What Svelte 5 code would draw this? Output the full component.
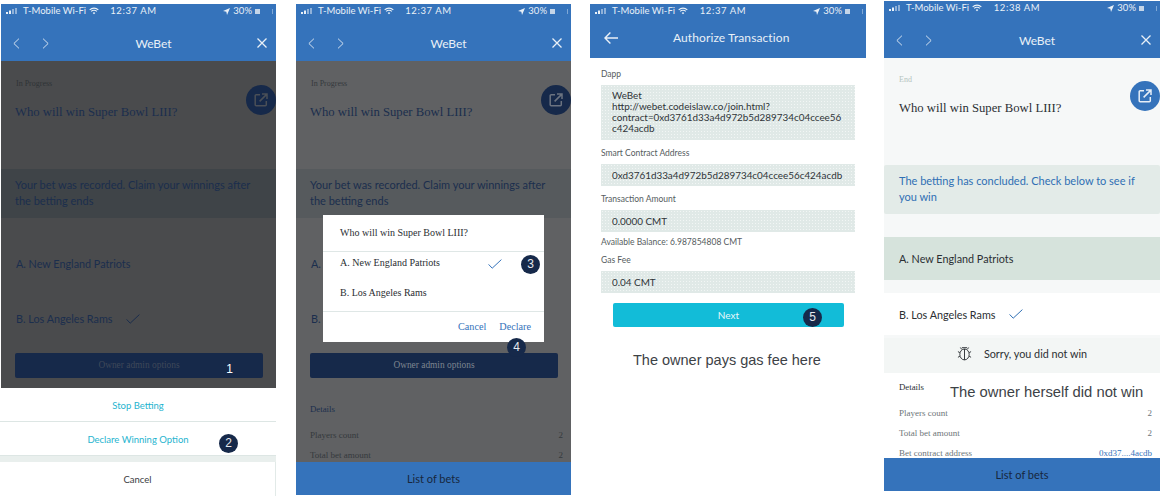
<script>
	const options = ['A. New England Patriots', 'B. Los Angeles Rams'];
	const contract = '0xd3761d33a4d972b5d289734c04ccee56c424acdb';
</script>

{#snippet status(time)}
	<div class="status">
		<span class="carrier">
			<svg class="signal" viewBox="0 0 14 6" width="14" height="6">
				<rect x="0" y="4" width="2" height="2" />
				<rect x="3" y="2.5" width="2" height="3.5" />
				<rect x="6" y="1" width="2" height="5" opacity=".5" />
				<rect x="9" y="0" width="2" height="6" opacity=".5" />
			</svg>
			T-Mobile Wi-Fi
			<svg viewBox="0 0 12 9" width="10" height="8" fill="none" stroke="currentColor" stroke-width="1.3">
				<path d="M.8 3.2a7.4 7.4 0 0 1 10.4 0M2.6 5a4.8 4.8 0 0 1 6.8 0" />
				<path d="M4.4 6.8a2.2 2.2 0 0 1 3.2 0L6 8.4z" fill="currentColor" stroke="none" />
			</svg>
		</span>
		<span class="time">{time}</span>
		<span class="battery">
			<svg viewBox="0 0 8 8" width="7" height="7" fill="currentColor"><path d="M8 0 4.6 8 3.8 4.2 0 3.4z" /></svg>
			30%
			<i class="cell"></i>
			<i class="bolt"></i>
		</span>
	</div>
{/snippet}

{#snippet webetNav()}
	<div class="nav">
		<div class="nav-left">
			<svg viewBox="0 0 8 12" width="7" height="11" fill="none" stroke="currentColor"><path d="M6.8.5 1 6l5.8 5.5" /></svg>
			<svg viewBox="0 0 8 12" width="7" height="11" fill="none" stroke="currentColor"><path d="M1.2.5 7 6l-5.8 5.5" /></svg>
		</div>
		<div class="nav-title">WeBet</div>
		<div class="nav-right">
			<svg viewBox="0 0 10 10" width="10" height="10" fill="none" stroke="currentColor" stroke-width="1.3"><path d="m.5.5 9 9M9.5.5l-9 9" /></svg>
		</div>
	</div>
{/snippet}

{#snippet check()}
	<svg class="check" viewBox="0 0 14 10" width="14" height="10" fill="none" stroke="currentColor"><path d="m.6 5.4 3.6 3.8L13.4.6" /></svg>
{/snippet}

{#snippet fab()}
	<div class="fab">
		<svg viewBox="0 0 14 14" width="14" height="14" fill="none" stroke="currentColor" stroke-width="1.5">
			<path d="M6 1.7H2.2a1 1 0 0 0-1 1v9.1a1 1 0 0 0 1 1h9.1a1 1 0 0 0 1-1V8" />
			<path d="M5.6 8.4 12.6 1.4M8 1h5v5" />
		</svg>
	</div>
{/snippet}

{#snippet betBody(tag, notice, winner)}
	<div class="tag">{tag}</div>
	<div class="question">Who will win Super Bowl LIII?</div>
	{@render fab()}
	<div class="notice">{notice}</div>
	<div class="option first">{options[0]}</div>
	<div class="option second">{options[1]} {#if winner}{@render check()}{/if}</div>
{/snippet}

{#snippet details(address)}
	<div class="details-title">Details</div>
	<div class="detail first-detail"><span>Players count</span><span>2</span></div>
	<div class="detail"><span>Total bet amount</span><span>2</span></div>
	{#if address}
		<div class="detail"><span>Bet contract address</span><span class="link">{address}</span></div>
	{/if}
{/snippet}

<div class="shots">
	<section class="phone dim one">
		<header>
			{@render status('12:37 AM')}
			{@render webetNav()}
		</header>
		{@render betBody('In Progress', 'Your bet was recorded. Claim your winnings after the betting ends', true)}
		<div class="owner">Owner admin options</div>
		<div class="sheet">
			<div class="sheet-row">Stop Betting</div>
			<div class="sheet-row">Declare Winning Option</div>
			<div class="sheet-row cancel">Cancel</div>
		</div>
		<span class="badge plain b1">1</span>
		<span class="badge b2">2</span>
	</section>

	<section class="phone dim two">
		<header>
			{@render status('12:37 AM')}
			{@render webetNav()}
		</header>
		{@render betBody('In Progress', 'Your bet was recorded. Claim your winnings after the betting ends', true)}
		<div class="owner">Owner admin options</div>
		{@render details()}
		<div class="list-bar">List of bets</div>
		<div class="modal">
			<div class="modal-title">Who will win Super Bowl LIII?</div>
			<div class="modal-options">
				<div class="modal-option">{options[0]} {@render check()}</div>
				<div class="modal-option">{options[1]}</div>
			</div>
			<div class="modal-actions"><span>Cancel</span><span>Declare</span></div>
		</div>
		<span class="badge b3">3</span>
		<span class="badge b4">4</span>
	</section>

	<section class="phone three">
		<header>
			{@render status('12:37 AM')}
			<div class="nav auth">
				<svg viewBox="0 0 14 12" width="14" height="12" fill="none" stroke="currentColor" stroke-width="1.4"><path d="M14 6H1M6.4.6 1 6l5.4 5.4" /></svg>
				<div class="auth-title">Authorize Transaction</div>
			</div>
		</header>
		<div class="form">
			<div class="label">Dapp</div>
			<div class="box dapp">WeBet<br />http://webet.codeislaw.co/join.html?<br />contract=0xd3761d33a4d972b5d289734c04ccee56<br />c424acdb</div>
			<div class="label">Smart Contract Address</div>
			<div class="box">{contract}</div>
			<div class="label">Transaction Amount</div>
			<div class="box">0.0000 CMT</div>
			<div class="balance">Available Balance: 6.987854808 CMT</div>
			<div class="label gas">Gas Fee</div>
			<div class="box">0.04 CMT</div>
			<div class="next">Next</div>
			<p class="remark">The owner pays gas fee here</p>
		</div>
		<span class="badge b5">5</span>
	</section>

	<section class="phone four">
		<header>
			{@render status('12:38 AM')}
			{@render webetNav()}
		</header>
		{@render betBody('End', 'The betting has concluded. Check below to see if you win', true)}
		<div class="sorry">
			<svg viewBox="0 0 16 16" width="15" height="15" fill="none" stroke="currentColor">
				<ellipse cx="8" cy="9" rx="5" ry="5.8" />
				<path d="M8 3.2V14.8M5 3.6 3.6 1.6M11 3.6l1.4-2M5.2 1.8h5.6M3 7 1 6M13 7l2-1M3 11l-2 1M13 11l2 1" />
			</svg>
			<span>Sorry, you did not win</span>
		</div>
		{@render details('0xd37....4acdb')}
		<div class="list-bar">List of bets</div>
		<p class="remark over">The owner herself did not win</p>
	</section>
</div>

<style>
	:global(body) {
		background: #fff;
	}
	.shots {
		display: flex;
		align-items: flex-start;
		height: 496px;
		padding-left: 1px;
		overflow: hidden;
		font-family: Lato, 'Open Sans', sans-serif;
	}
	.phone {
		--page: #fff;
		--ink: #2b2f33;
		--muted: #6d7578;
		--band: #e3ebe8;
		--band-ink: #2f6fb4;
		--choice: #d6e3dc;
		--owner: #16294a;
		position: relative;
		flex: none;
		width: 275px;
		height: 492px;
		margin-top: 4px;
		background: var(--page);
		color: var(--ink);
	}
	.dim {
		--ink: #1b2e4d;
		--band-ink: #1b2e4d;
		--choice: transparent;
	}
	.one {
		--page: #4a4b4d;
		--band: #3f4448;
		--muted: #2f3336;
	}
	.two {
		--page: #606163;
		--band: #565a5d;
		--muted: #35393d;
		height: 491px;
		margin-left: 20px;
	}
	.three {
		width: 276px;
		margin-left: 19px;
	}
	.four {
		width: 276px;
		height: 490px;
		margin-top: 1px;
		margin-left: 18px;
		background: linear-gradient(#f6f8f8 372px, #fff 372px);
	}

	header {
		background: #3573bb;
		color: #e9f0f7;
	}
	.status {
		display: grid;
		grid-template-columns: 1fr auto 1fr;
		align-items: center;
		height: 14px;
		padding: 0 3px 0 5px;
		font-size: 9.5px;
		line-height: 14px;
		white-space: nowrap;
	}
	.carrier {
		display: flex;
		align-items: center;
		gap: 3px;
	}
	.signal {
		fill: currentColor;
	}
	.time {
		margin-right: 12px;
		letter-spacing: 0.6px;
	}
	.battery {
		display: flex;
		align-items: center;
		justify-content: flex-end;
		gap: 3px;
	}
	.cell {
		width: 5px;
		height: 5px;
		background: #c4d5e8;
	}
	.bolt {
		width: 5px;
		height: 5px;
		margin-left: 4px;
		border-right: 1px solid #7fa8d6;
	}
	.nav {
		display: flex;
		align-items: center;
		height: 36px;
		padding-top: 7px;
	}
	.nav-left {
		display: flex;
		gap: 22px;
		width: 60px;
		padding-left: 12px;
		box-sizing: border-box;
	}
	.nav-title {
		flex: 1;
		text-align: center;
		font-size: 12px;
	}
	.nav-right {
		display: flex;
		width: 30px;
		padding-left: 11px;
		box-sizing: border-box;
	}
	.auth {
		height: 39px;
		padding: 0 0 1px 14px;
		gap: 0;
	}
	.auth-title {
		margin-left: 55px;
		font-size: 12px;
		letter-spacing: 0.1px;
	}

	.tag {
		height: 14px;
		margin: 16px 0 0 15px;
		font: 8px/14px 'Liberation Serif', serif;
		color: var(--muted);
	}
	.question {
		height: 20px;
		margin: 11px 0 0 14px;
		font: 12.7px/20px 'Liberation Serif', serif;
		color: var(--ink);
	}
	.fab {
		position: absolute;
		top: 81px;
		right: 0;
		display: flex;
		align-items: center;
		justify-content: center;
		width: 30px;
		height: 30px;
		border-radius: 50%;
		background: #3573bb;
		color: #e6eef7;
	}
	.dim .fab {
		background: #16294a;
		color: #4a4f57;
	}
	.two .fab {
		color: #6b7380;
	}
	.notice {
		height: 33px;
		margin-top: 47px;
		padding: 8px 14px;
		font-size: 11px;
		line-height: 16px;
		background: var(--band);
		color: var(--band-ink);
	}
	.option {
		display: flex;
		align-items: center;
		height: 42px;
		margin-top: 24px;
		padding-left: 15px;
		font-size: 10.8px;
	}
	.second {
		gap: 14px;
		margin-top: 13px;
		height: 43px;
	}
	.check {
		color: #2f6fb4;
	}
	.dim .check {
		color: #1b2e4d;
	}
	.modal .check {
		color: #3573bb;
		margin-top: 4px;
	}
	.owner {
		height: 25px;
		margin: 13px 13px 0 14px;
		border-radius: 2px;
		background: var(--owner);
		color: #3e4859;
		font: 9.4px/25px 'Liberation Serif', serif;
		text-align: center;
	}
	.two .owner {
		color: #7d8590;
	}

	.sheet {
		position: absolute;
		top: 384px;
		bottom: 0;
		left: -1px;
		right: 0;
		background: #fff;
		text-align: center;
		font-size: 9.5px;
		color: #1fb4cf;
	}
	.sheet-row {
		height: 33px;
		line-height: 35px;
		border-bottom: 1px solid #dde6e4;
	}
	.cancel {
		height: 34px;
		margin-top: 6px;
		border: 0;
		border-right: 1px solid #e2eae8;
		color: #3c4043;
		box-shadow: 0 -6px 0 #e9efed;
	}

	.badge {
		position: absolute;
		display: flex;
		align-items: center;
		justify-content: center;
		width: 19px;
		height: 19px;
		border-radius: 50%;
		background: #16294a;
		color: #e6e9ee;
		font: 12px/19px 'Liberation Sans', sans-serif;
	}
	.plain {
		background: transparent;
		color: #fff;
	}
	.b1 {
		top: 356px;
		left: 219px;
	}
	.b2 {
		top: 430px;
		left: 218px;
	}
	.b3 {
		top: 251px;
		left: 225px;
	}
	.b4 {
		top: 334px;
		left: 211px;
	}
	.b5 {
		top: 304px;
		left: 213px;
	}

	.details-title {
		height: 14px;
		margin: 24px 0 0 14px;
		font: 8.8px/14px 'Liberation Serif', serif;
		color: var(--ink);
	}
	.detail {
		display: flex;
		justify-content: space-between;
		height: 20px;
		padding: 0 8px 0 14px;
		font: 9px/20px 'Liberation Serif', serif;
		color: var(--muted);
	}
	.first-detail {
		margin-top: 9px;
	}
	.link {
		color: #3573bb;
	}
	.list-bar {
		position: absolute;
		left: 0;
		right: 0;
		bottom: 0;
		height: 33px;
		background: #3573bb;
		color: #17273d;
		font-size: 11px;
		line-height: 33px;
		text-align: center;
	}

	.modal {
		position: absolute;
		top: 211px;
		left: 27px;
		width: 221px;
		height: 127px;
		background: #fff;
		font-family: 'Liberation Serif', serif;
		color: #2a2e32;
	}
	.modal-title {
		height: 36px;
		padding-left: 17px;
		font-size: 10px;
		line-height: 36px;
		border-bottom: 1px solid #dfe7e6;
	}
	.modal-options {
		display: flex;
		flex-direction: column;
		gap: 10px;
		height: 59px;
		border-bottom: 1px solid #dfe7e6;
	}
	.modal-option {
		display: flex;
		align-items: center;
		justify-content: space-between;
		height: 20px;
		padding: 0 42px 0 17px;
		font-size: 10px;
	}
	.modal-actions {
		display: flex;
		justify-content: flex-end;
		gap: 13px;
		padding: 9px 13px 0 0;
		font-size: 10.2px;
		color: #3573bb;
	}

	.form {
		padding: 0 11px;
	}
	.label {
		height: 14px;
		margin-top: 6px;
		font-size: 8.5px;
		line-height: 14px;
		color: #555c60;
	}
	.three header .nav {
		padding-top: 0;
	}
	.form .label:first-child {
		margin-top: 9px;
	}
	.box {
		margin-top: 4px;
		padding: 0 11px;
		height: 22px;
		background: #e0e9e7 radial-gradient(circle, #f2f6f5 0.6px, transparent 0.8px) 0 0 / 3px 3px;
		font-size: 9.9px;
		line-height: 22px;
		color: #2f3437;
		white-space: nowrap;
	}
	.dapp {
		height: 45px;
		padding-top: 5px;
		padding-bottom: 5px;
		line-height: 11px;
	}
	.balance {
		height: 14px;
		margin-top: 3px;
		font-size: 8.5px;
		line-height: 14px;
		color: #555c60;
	}
	.gas {
		margin-top: 4px;
	}
	.next {
		height: 24px;
		margin: 10px 11px 0 12px;
		border-radius: 2px;
		background: #12bcd8;
		color: #e6f7fa;
		font-size: 10px;
		line-height: 24px;
		text-align: center;
	}
	.remark {
		margin: 24px 0 0 32px;
		font: 14.5px/18px 'Liberation Sans', sans-serif;
		color: #3d4246;
		white-space: nowrap;
	}

	.four .tag {
		margin-top: 15px;
		color: #b5c4bf;
	}
	.four .question {
		margin-left: 15px;
	}
	.four .fab {
		top: 80px;
	}
	.four .notice {
		padding: 8px 15px;
		border-radius: 2px;
	}
	.four .first {
		margin-top: 23px;
		height: 43px;
		background: var(--choice);
	}
	.four .second {
		height: 42px;
		background: #fff;
	}
	.four .details-title {
		margin-top: 7px;
		margin-left: 15px;
	}
	.four .detail {
		padding-left: 15px;
	}
	.sorry {
		display: flex;
		align-items: center;
		justify-content: center;
		gap: 12px;
		height: 30px;
		margin-top: 3px;
		padding-bottom: 5px;
		background: #f3f6f5;
		font-size: 10.8px;
	}
	.over {
		position: absolute;
		top: 382px;
		left: 66px;
		margin: 0;
		font-size: 14.8px;
	}
</style>
